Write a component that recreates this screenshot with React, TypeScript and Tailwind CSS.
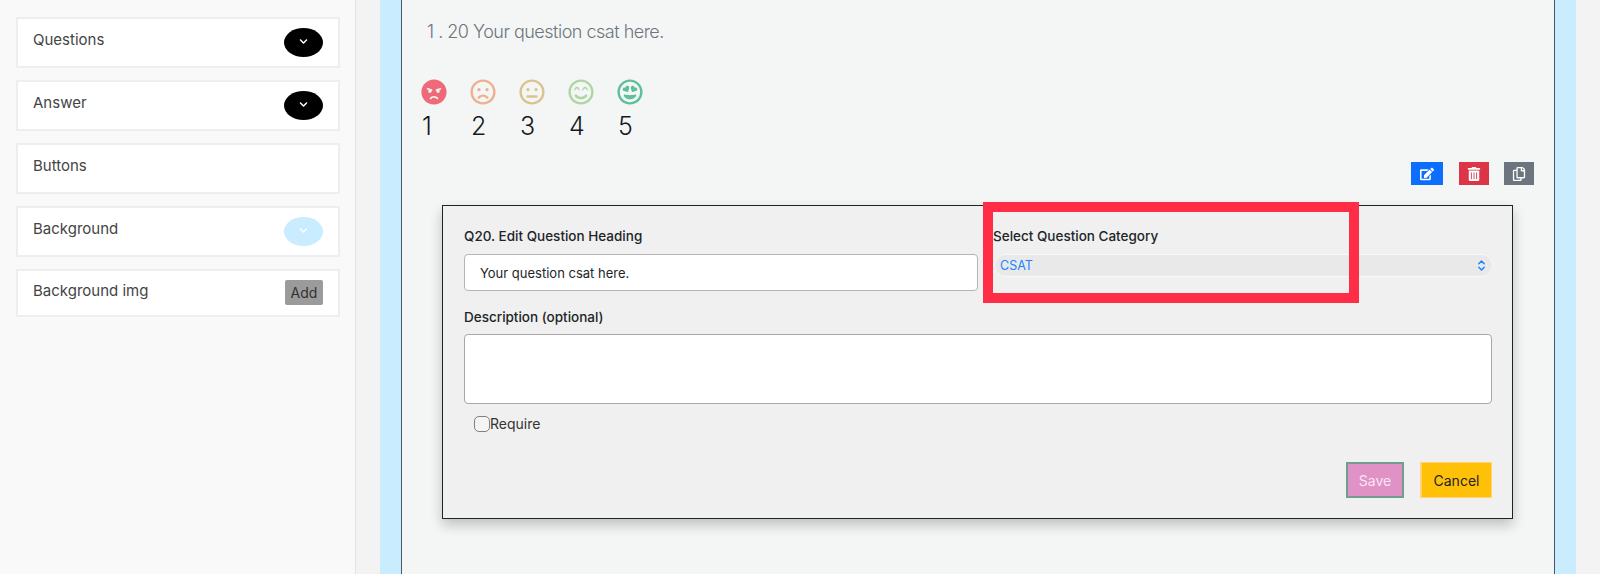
import React from "react";
import {
  FaAngry,
  FaChevronDown,
  FaEdit,
  FaRegCopy,
  FaRegFrown,
  FaRegGrinHearts,
  FaRegMeh,
  FaRegSmileBeam,
  FaTrashAlt,
} from "react-icons/fa";

const sideItems = [
  { label: "Questions", pill: "bg-black" },
  { label: "Answer", pill: "bg-black" },
  { label: "Buttons" },
  { label: "Background", pill: "bg-[#c9ecff]" },
];

const faces = [
  { Icon: FaAngry, color: "text-[#ee6a78]", n: 1 },
  { Icon: FaRegFrown, color: "text-[#eeb08e]", n: 2 },
  { Icon: FaRegMeh, color: "text-[#d8c38b]", n: 3 },
  { Icon: FaRegSmileBeam, color: "text-[#aed5a2]", n: 4 },
  { Icon: FaRegGrinHearts, color: "text-[#5cc09a]", n: 5 },
];

function SideCard({ label, pill }: any) {
  return (
    <div className="flex justify-between h-[51px] border-2 border-[#eeeeee] bg-white px-[15px]">
      <span className="mt-[11px] text-[15px] leading-[20px] text-[#444444]">{label}</span>
      {pill && (
        <span className={`mt-[9px] flex h-[29px] w-[39px] items-center justify-center rounded-[50%] pb-[3px] text-white ${pill}`}>
          <FaChevronDown className="text-[9px]" />
        </span>
      )}
    </div>
  );
}

export default function App() {
  return (
    <div className="flex h-[574px] overflow-hidden font-['Inter',sans-serif]">
      <aside className="flex w-[356px] shrink-0 flex-col gap-[12px] border-r border-[#e4e4e4] bg-[#f9f9f9] pl-[16px] pr-[15px] pt-[17px]">
        {sideItems.map((item) => (
          <SideCard key={item.label} {...item} />
        ))}
        <div className="flex h-[48px] justify-between border-2 border-[#eeeeee] bg-white px-[15px]">
          <span className="mt-[10px] text-[15px] leading-[20px] text-[#444444]">Background img</span>
          <span className="mt-[9px] flex h-[25px] w-[38px] items-center justify-center rounded-[2px] bg-[#9b9b9b] text-[14px] text-[#333333]">
            Add
          </span>
        </div>
      </aside>

      <div className="min-w-0 flex-1 bg-[#f3f3f3] px-[24px]">
        <div className="h-full bg-[#c9ecff] px-[21px]">
          <main className="relative h-full border-x border-[#46586a] bg-[#f4f6f6]">
            <p className="pl-[25px] pt-[18px] text-[18px] font-light leading-[28px] tracking-[-0.5px] text-[#6c757d]">
              1 . 20 Your question csat here.
            </p>

            <div className="mt-[33px] flex pl-[19px]">
              {faces.map(({ Icon, color, n }) => (
                <div key={n} className="w-[49px]">
                  <Icon className={`text-[26px] ${color}`} />
                  <div className="mt-[6px] pl-[1px] text-[25px] font-[350] leading-[30px] text-[#16181b]">{n}</div>
                </div>
              ))}
            </div>

            <div className="mt-[21px] flex justify-end pr-[20px]">
              <span className="flex h-[23px] w-[32px] items-center justify-center bg-[#0d6efd] text-[14px] text-white">
                <FaEdit />
              </span>
              <span className="ml-[16px] flex h-[23px] w-[30px] items-center justify-center bg-[#dc3545] text-[14px] text-white">
                <FaTrashAlt />
              </span>
              <span className="ml-[15px] flex h-[23px] w-[30px] items-center justify-center bg-[#6c757d] text-[14px] text-white">
                <FaRegCopy />
              </span>
            </div>

            <section className="relative ml-[40px] mr-[41px] mt-[20px] h-[314px] border border-[#222222] bg-[#f0f0f0] pl-[21px] pr-[20px] pt-[21px] shadow-[0_6px_12px_rgba(0,0,0,0.22)]">
              <div className="grid grid-cols-[514px_1fr] gap-x-[15px]">
                <div>
                  <label className="block text-[13.5px] font-medium leading-[18px] text-[#212529]">
                    Q20. Edit Question Heading
                  </label>
                  <input
                    readOnly
                    value="Your question csat here."
                    className="mt-[9px] h-[37px] w-full rounded-[4px] border border-[#b5b5b5] bg-white px-[15px] text-[13px] text-[#212529]"
                  />
                </div>
                <div>
                  <label className="block text-[13.5px] font-medium leading-[18px] text-[#212529]">
                    Select Question Category
                  </label>
                  <div className="relative ml-[1px] mr-[-1px] mt-[9px] flex h-[23px] items-center rounded-full border border-[#f8f8f8] bg-[#e9e9e9] pl-[5px] text-[12.5px] text-[#1a84ff]">
                    <select className="h-full w-full appearance-none bg-transparent pt-[1px] outline-none">
                      <option>CSAT</option>
                    </select>
                    <svg viewBox="0 0 10 14" className="absolute right-[6px] top-[4px] h-[13px] w-[9px]" fill="none" stroke="#1a84ff" strokeWidth="1.6" strokeLinecap="round" strokeLinejoin="round">
                      <path d="M2 5l3-3 3 3M2 9l3 3 3-3" />
                    </svg>
                  </div>
                </div>
              </div>

              <label className="mt-[17px] block text-[13.5px] font-medium leading-[18px] text-[#212529]">
                Description (optional)
              </label>
              <textarea
                readOnly
                className="mt-[8px] block h-[70px] w-full resize-none rounded-[4px] border border-[#a8a8a8] bg-white"
              />

              <div className="ml-[10px] mt-[10px] flex items-center">
                <span className="h-[16px] w-[16px] rounded-[5px] border border-[#808080] bg-[#f4f4f4]" />
                <span className="text-[14px] leading-[20px] text-[#333333]">Require</span>
              </div>

              <div className="mt-[28px] flex justify-end">
                <button className="h-[36px] w-[58px] border-2 border-[#6f9e8c] bg-[#e092c6] text-[14px] text-[#fbe3f3]">
                  Save
                </button>
                <button className="ml-[16px] h-[36px] w-[72px] border border-l-2 border-[#ffd27a] bg-[#ffc107] text-[14px] text-[#222222]">
                  Cancel
                </button>
              </div>

              {/* annotation box drawn over the form */}
              <div className="absolute left-[540px] top-[-4px] h-[101px] w-[376px] border-[10px] border-[#ff2d46]" />
            </section>
          </main>
        </div>
      </div>
    </div>
  );
}
